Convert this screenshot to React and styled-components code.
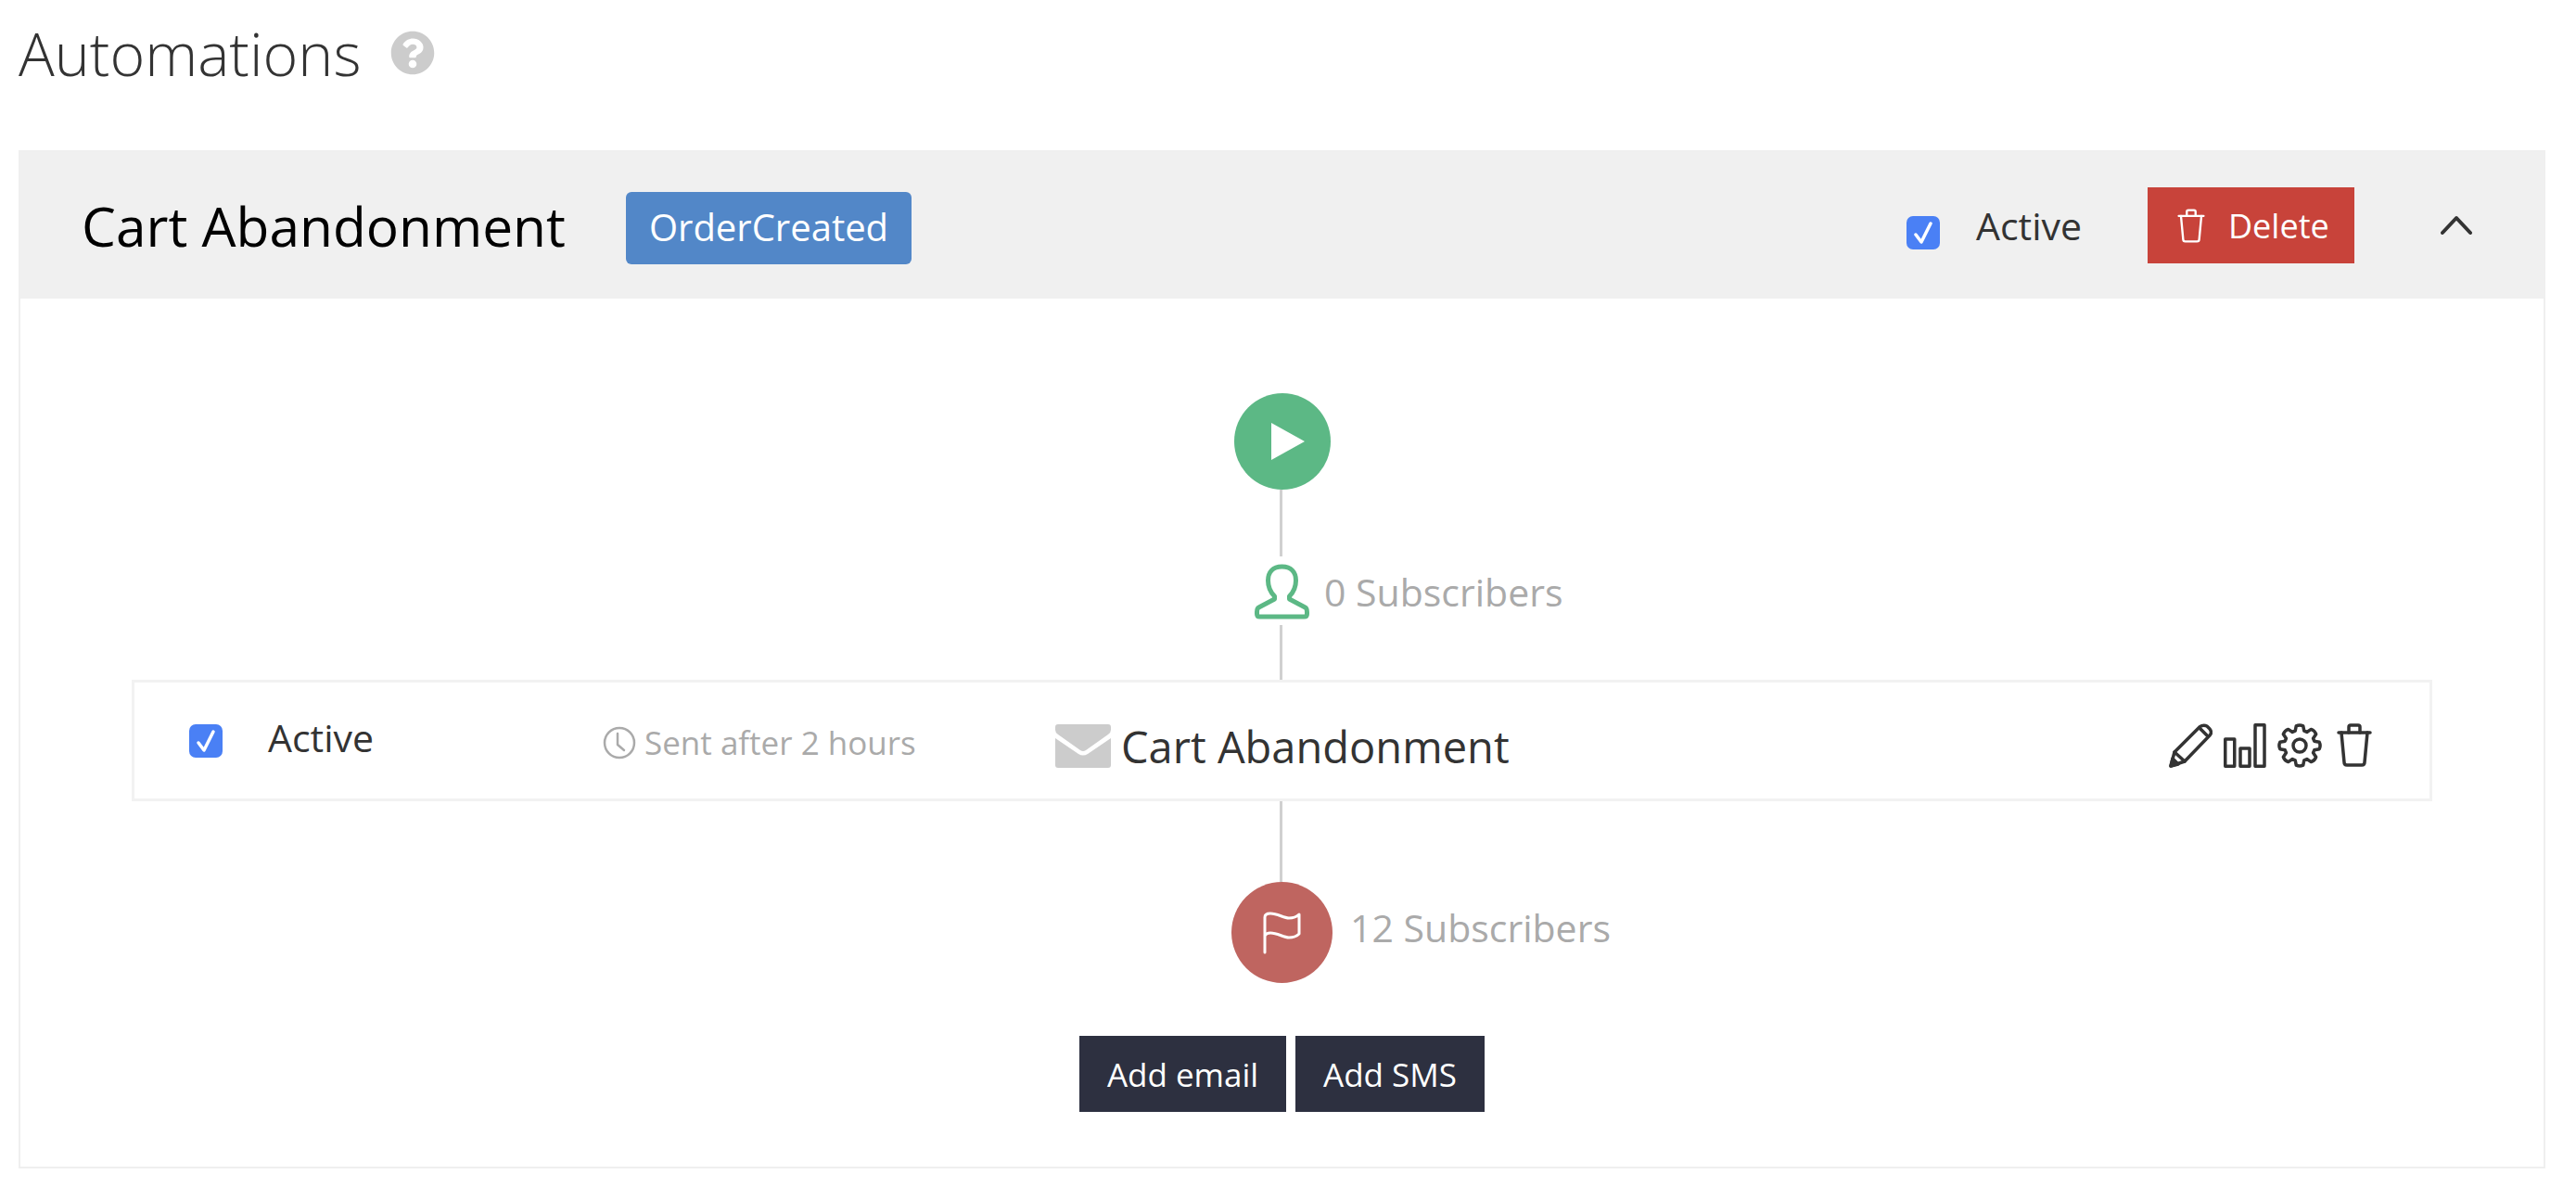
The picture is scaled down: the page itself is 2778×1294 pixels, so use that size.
import React from "react";
import styled, { createGlobalStyle } from "styled-components";
import { FaQuestionCircle } from "react-icons/fa";

const GlobalStyle = createGlobalStyle`
  body {
    margin: 0;
    background: #fff;
    font-family: "Open Sans", "Liberation Sans", sans-serif;
    color: #333;
  }
`;

const Page = styled.div`
  width: 2725px;
  margin-left: 20px;
`;

const PageTitle = styled.div`
  display: flex;
  align-items: center;
  height: 162px;
  padding-bottom: 48px;
  box-sizing: border-box;
  gap: 32px;
  color: #ccc;
`;

const TitleText = styled.h1`
  margin: 0;
  font-size: 64.5px;
  line-height: 114px;
  font-weight: 300;
  color: #333;
`;

const Panel = styled.section`
  height: 1098px;
  box-sizing: border-box;
  border: 2px solid #efefef;
`;

const PanelHeader = styled.header`
  display: flex;
  align-items: center;
  height: 158px;
  padding: 0 77px 0 66px;
  background: #f0f0f0;
`;

const PanelTitle = styled.h2`
  margin: 0;
  font-size: 58.6px;
  font-weight: 400;
  color: #000;
`;

const Badge = styled.span`
  display: flex;
  align-items: center;
  height: 78px;
  margin: 6px 0 0 65px;
  padding: 0 25px 4px;
  box-sizing: border-box;
  border-radius: 6px;
  background: #5287c8;
  color: #fff;
  font-size: 40px;
`;

const HeaderActions = styled.div`
  display: flex;
  align-items: center;
  margin-left: auto;
`;

const CheckBox = styled.span`
  display: flex;
  align-items: center;
  justify-content: center;
  flex: none;
  width: 36px;
  height: 36px;
  margin-top: ${(p) => p.$offset || 0}px;
  border-radius: 7px;
  background: #4a80f5;
`;

const ActiveLabel = styled.span`
  margin-left: 39px;
  font-size: 41px;
  line-height: 56px;
  color: #333;
`;

const DeleteButton = styled.button`
  display: flex;
  align-items: center;
  gap: 25px;
  width: 223px;
  height: 82px;
  margin-left: 71px;
  padding: 0 0 0 32px;
  border: none;
  background: #c8433a;
  color: #fff;
  font: inherit;
  font-size: 36px;
`;

const Collapse = styled.span`
  display: flex;
  margin-left: 93px;
`;

const Flow = styled.div`
  display: flex;
  flex-direction: column;
  align-items: center;
  padding-top: 102px;
`;

const Connector = styled.div`
  width: 3px;
  height: ${(p) => p.$height}px;
  margin-right: 2px;
  background: #d0d0d0;
`;

const Circle = styled.div`
  display: flex;
  align-items: center;
  justify-content: center;
  width: ${(p) => p.$size}px;
  height: ${(p) => p.$size}px;
  border-radius: 50%;
  background: ${(p) => p.$color};
`;

const PlayGlyph = styled.svg`
  margin-left: 12px;
`;

const Step = styled.div`
  display: grid;
  grid-template-columns: 1fr auto 1fr;
  align-items: center;
  width: 100%;
  padding: ${(p) => p.$padding || "0"};
  box-sizing: border-box;
`;

const StepLabel = styled.span`
  grid-column: 3;
  margin-left: ${(p) => p.$gap}px;
  margin-bottom: ${(p) => p.$lift || 0}px;
  font-size: 41px;
  line-height: 56px;
  color: #aaa;
`;

const StepIcon = styled.div`
  grid-column: 2;
  display: flex;
`;

const EmailRow = styled.div`
  display: grid;
  grid-template-columns: 85px 361px 488px 1fr auto;
  align-items: center;
  width: 2481px;
  height: 131px;
  box-sizing: border-box;
  padding: 0 62px 0 59px;
  border: 3px solid #f2f2f2;
`;

const RowActive = styled.span`
  margin-bottom: 8px;
  font-size: 41px;
  line-height: 40px;
  color: #333;
`;

const SentAfter = styled.span`
  display: flex;
  align-items: center;
  gap: 9px;
  margin-top: 4px;
  font-size: 35px;
  color: #aaa;
`;

const EmailName = styled.span`
  display: flex;
  align-items: center;
  gap: 11px;
  margin-top: 12px;
  font-size: 47px;
  line-height: 56px;
  color: #333;
`;

const RowIcons = styled.div`
  display: flex;
  align-items: center;
  gap: 12px;
  margin-top: 10px;
  color: #333;
`;

const GearSlot = styled.span`
  display: flex;
  margin-right: 4px;
`;

const ButtonBar = styled.div`
  display: flex;
  gap: 10px;
  margin-top: 57px;
`;

const DarkButton = styled.button`
  height: 82px;
  width: ${(p) => p.$width}px;
  border: none;
  background: #2d3040;
  color: #fff;
  font: inherit;
  font-size: 35px;
`;

const Check = () => (
  <svg width="24" height="26" viewBox="0 0 24 26" fill="none" stroke="#fff" strokeWidth="3.5" strokeLinecap="round" strokeLinejoin="round">
    <path d="M4 15 L10 23 L20 3" />
  </svg>
);

const TrashIcon = ({ width, height, strokeWidth }) => (
  <svg width={width} height={height} viewBox="0 0 38 47" fill="none" stroke="currentColor" strokeWidth={strokeWidth} strokeLinejoin="round" strokeLinecap="round">
    <path d="M2 10 H36" />
    <path d="M13 10 V4 Q13 2 15 2 H23 Q25 2 25 4 V10" />
    <path d="M5 10 L8 42 Q8 45 11 45 H27 Q30 45 30 42 L33 10" />
  </svg>
);

const PersonIcon = () => (
  <svg width="61" height="60" viewBox="0 0 60 60" fill="none" stroke="#5cb885" strokeWidth="5" strokeLinejoin="round">
    <path d="M30 3 C20 3 15 9 15 18 C15 26 18 31 22 35 L22 38 L5 47 C3 48 3 50 3 52 L3 54 Q3 57 6 57 L54 57 Q57 57 57 54 L57 52 C57 50 57 48 55 47 L38 38 L38 35 C42 31 45 26 45 18 C45 9 40 3 30 3 Z" />
  </svg>
);

const ClockIcon = () => (
  <svg width="36" height="36" viewBox="0 0 36 36" fill="none" stroke="#aaa" strokeWidth="2.5" strokeLinecap="round" strokeLinejoin="round">
    <circle cx="18" cy="18" r="16" />
    <path d="M16 8 V20 L23 26" />
  </svg>
);

const EnvelopeIcon = () => (
  <svg width="60" height="47" viewBox="0 0 60 47" fill="#ccc">
    <path d="M3 0 H57 Q60 0 60 3 V6 Q60 9 57 11 L33 28 Q30 30 27 28 L3 11 Q0 9 0 6 V3 Q0 0 3 0 Z" />
    <path d="M0 15 L25 32 Q30 35 35 32 L60 15 V44 Q60 47 57 47 H3 Q0 47 0 44 Z" />
  </svg>
);

const PencilIcon = () => (
  <svg width="47" height="48" viewBox="0 0 47 48" fill="none" stroke="currentColor" strokeWidth="3.5" strokeLinejoin="round" strokeLinecap="round">
    <path d="M2 46 L6 31 L33 4 Q37 1 41 3 L44 6 Q47 10 44 13 L17 41 Z" />
    <path d="M34 6 L41 13" />
    <path d="M6 31 L17 41" />
    <path d="M2 46 L4 38 L10 44 Z" fill="currentColor" />
  </svg>
);

const BarsIcon = () => (
  <svg width="46" height="48" viewBox="0 0 46 48" fill="none" stroke="currentColor" strokeWidth="3.5" strokeLinejoin="round">
    <rect x="1.75" y="17" width="10" height="29.25" />
    <rect x="18" y="27" width="10" height="19.25" />
    <rect x="34" y="1.75" width="10" height="44.5" />
  </svg>
);

// eight teeth, one pointing straight up
const gearPath = () => {
  const point = (r, deg) => {
    const a = ((deg - 90) * Math.PI) / 180;
    return `${(24 + r * Math.cos(a)).toFixed(2)} ${(24 + r * Math.sin(a)).toFixed(2)}`;
  };
  let d = "";
  for (let i = 0; i < 8; i++) {
    const c = i * 45;
    d += `${i === 0 ? "M" : "L"}${point(16.5, c - 17)} L${point(21.5, c - 10)} Q${point(23, c)} ${point(21.5, c + 10)} L${point(16.5, c + 17)} `;
  }
  return d + "Z";
};

const GearIcon = () => (
  <svg width="48" height="48" viewBox="0 0 48 48" fill="none" stroke="currentColor" strokeWidth="3.5" strokeLinejoin="round">
    <path d={gearPath()} />
    <circle cx="24" cy="24" r="7" />
  </svg>
);

const FlagIcon = () => (
  <svg width="41" height="46" viewBox="0 0 41 46" fill="none" stroke="#fff" strokeWidth="3" strokeLinecap="round" strokeLinejoin="round">
    <path d="M2 44 V6 C2 3 4 2 8 2 C16 2 22 7 28 7 C32 7 36 6 39 3 V24 C36 27 32 28 28 28 C22 28 16 23 8 23 C5 23 3 24 2 26" />
  </svg>
);

function App() {
  return (
    <Page>
      <GlobalStyle />
      <PageTitle>
        <TitleText>Automations</TitleText>
        <FaQuestionCircle size={48} />
      </PageTitle>
      <Panel>
        <PanelHeader>
          <PanelTitle>Cart Abandonment</PanelTitle>
          <Badge>OrderCreated</Badge>
          <HeaderActions>
            <CheckBox $offset={16}>
              <Check />
            </CheckBox>
            <ActiveLabel>Active</ActiveLabel>
            <DeleteButton>
              <TrashIcon width={30} height={37} strokeWidth={3} />
              Delete
            </DeleteButton>
            <Collapse>
              <svg width="34" height="22" viewBox="0 0 34 22" fill="none" stroke="#333" strokeWidth="4" strokeLinecap="round" strokeLinejoin="round">
                <path d="M2 19 L17 3 L32 19" />
              </svg>
            </Collapse>
          </HeaderActions>
        </PanelHeader>
        <Flow>
          <Circle $size={104} $color="#5cb885">
            <PlayGlyph width="38" height="42" viewBox="0 0 38 42" fill="#fff">
              <path d="M1 1 L37 21 L1 41 Z" />
            </PlayGlyph>
          </Circle>
          <Connector $height={72} />
          <Step $padding="8px 0 6px">
            <StepIcon>
              <PersonIcon />
            </StepIcon>
            <StepLabel $gap={15}>0 Subscribers</StepLabel>
          </Step>
          <Connector $height={59} />
          <EmailRow>
            <CheckBox>
              <Check />
            </CheckBox>
            <RowActive>Active</RowActive>
            <SentAfter>
              <ClockIcon />
              Sent after 2 hours
            </SentAfter>
            <EmailName>
              <EnvelopeIcon />
              Cart Abandonment
            </EmailName>
            <RowIcons>
              <PencilIcon />
              <BarsIcon />
              <GearSlot>
                <GearIcon />
              </GearSlot>
              <TrashIcon width={38} height={47} strokeWidth={3.5} />
            </RowIcons>
          </EmailRow>
          <Connector $height={87} />
          <Step>
            <StepIcon>
              <Circle $size={109} $color="#bf6560">
                <FlagIcon />
              </Circle>
            </StepIcon>
            <StepLabel $gap={19} $lift={11}>12 Subscribers</StepLabel>
          </Step>
          <ButtonBar>
            <DarkButton $width={223}>Add email</DarkButton>
            <DarkButton $width={204}>Add SMS</DarkButton>
          </ButtonBar>
        </Flow>
      </Panel>
    </Page>
  );
}

export default App;
